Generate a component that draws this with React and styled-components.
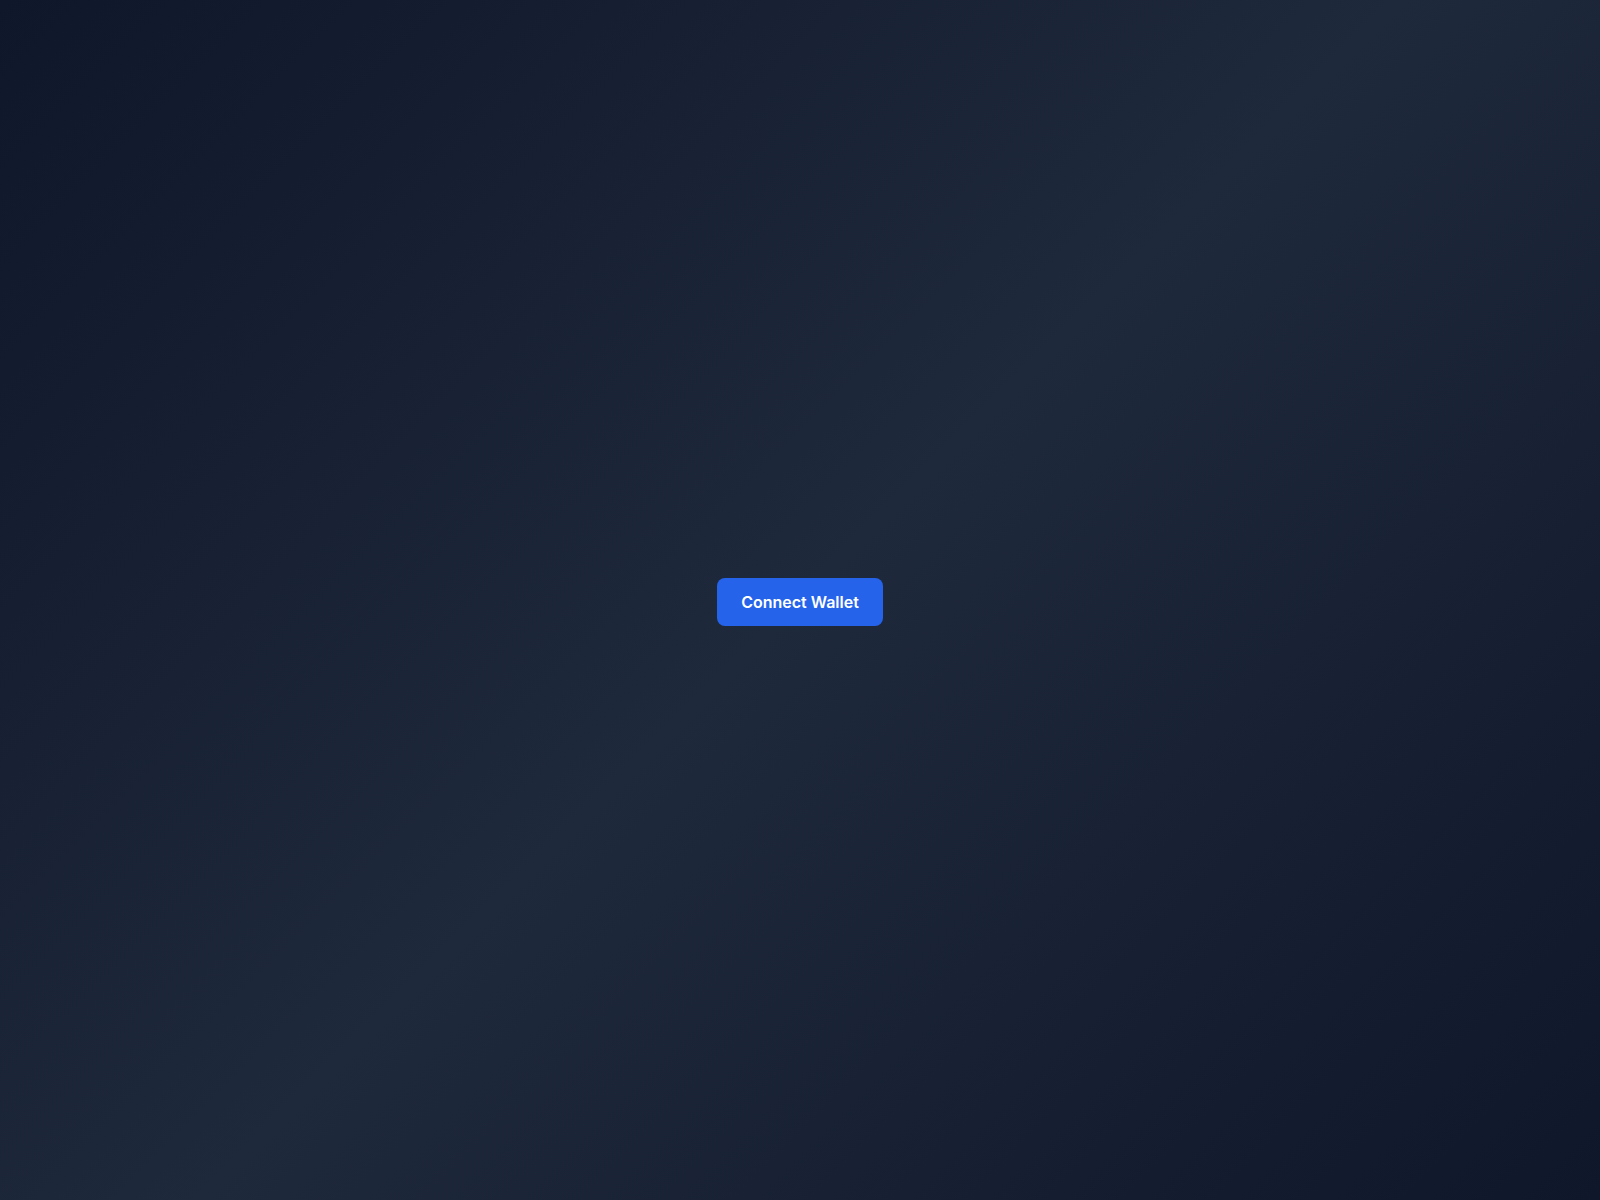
import React from "react";
import styled, { createGlobalStyle } from "styled-components";

const GlobalStyle = createGlobalStyle`
  * { box-sizing: border-box; }
  html, body { margin: 0; padding: 0; }
  body { font-family: Inter, "Noto Sans", Arial, sans-serif; }
`;

const Page = styled.div`
  min-height: 100vh;
  padding-top: 4px;
  display: flex;
  align-items: center;
  justify-content: center;
  background: linear-gradient(135deg, #0f172a 0%, #1e293b 50%, #0f172a 100%);
`;

const ConnectButton = styled.button`
  background: #2563eb;
  color: #ffffff;
  border: none;
  border-radius: 8px;
  padding: 12px 24px;
  font-family: Inter, "Noto Sans", Arial, sans-serif;
  font-size: 16px;
  line-height: 24px;
  font-weight: 600;
  cursor: pointer;
`;

export default function App() {
  return (
    <>
      <GlobalStyle />
      <Page>
        <ConnectButton>Connect Wallet</ConnectButton>
      </Page>
    </>
  );
}
